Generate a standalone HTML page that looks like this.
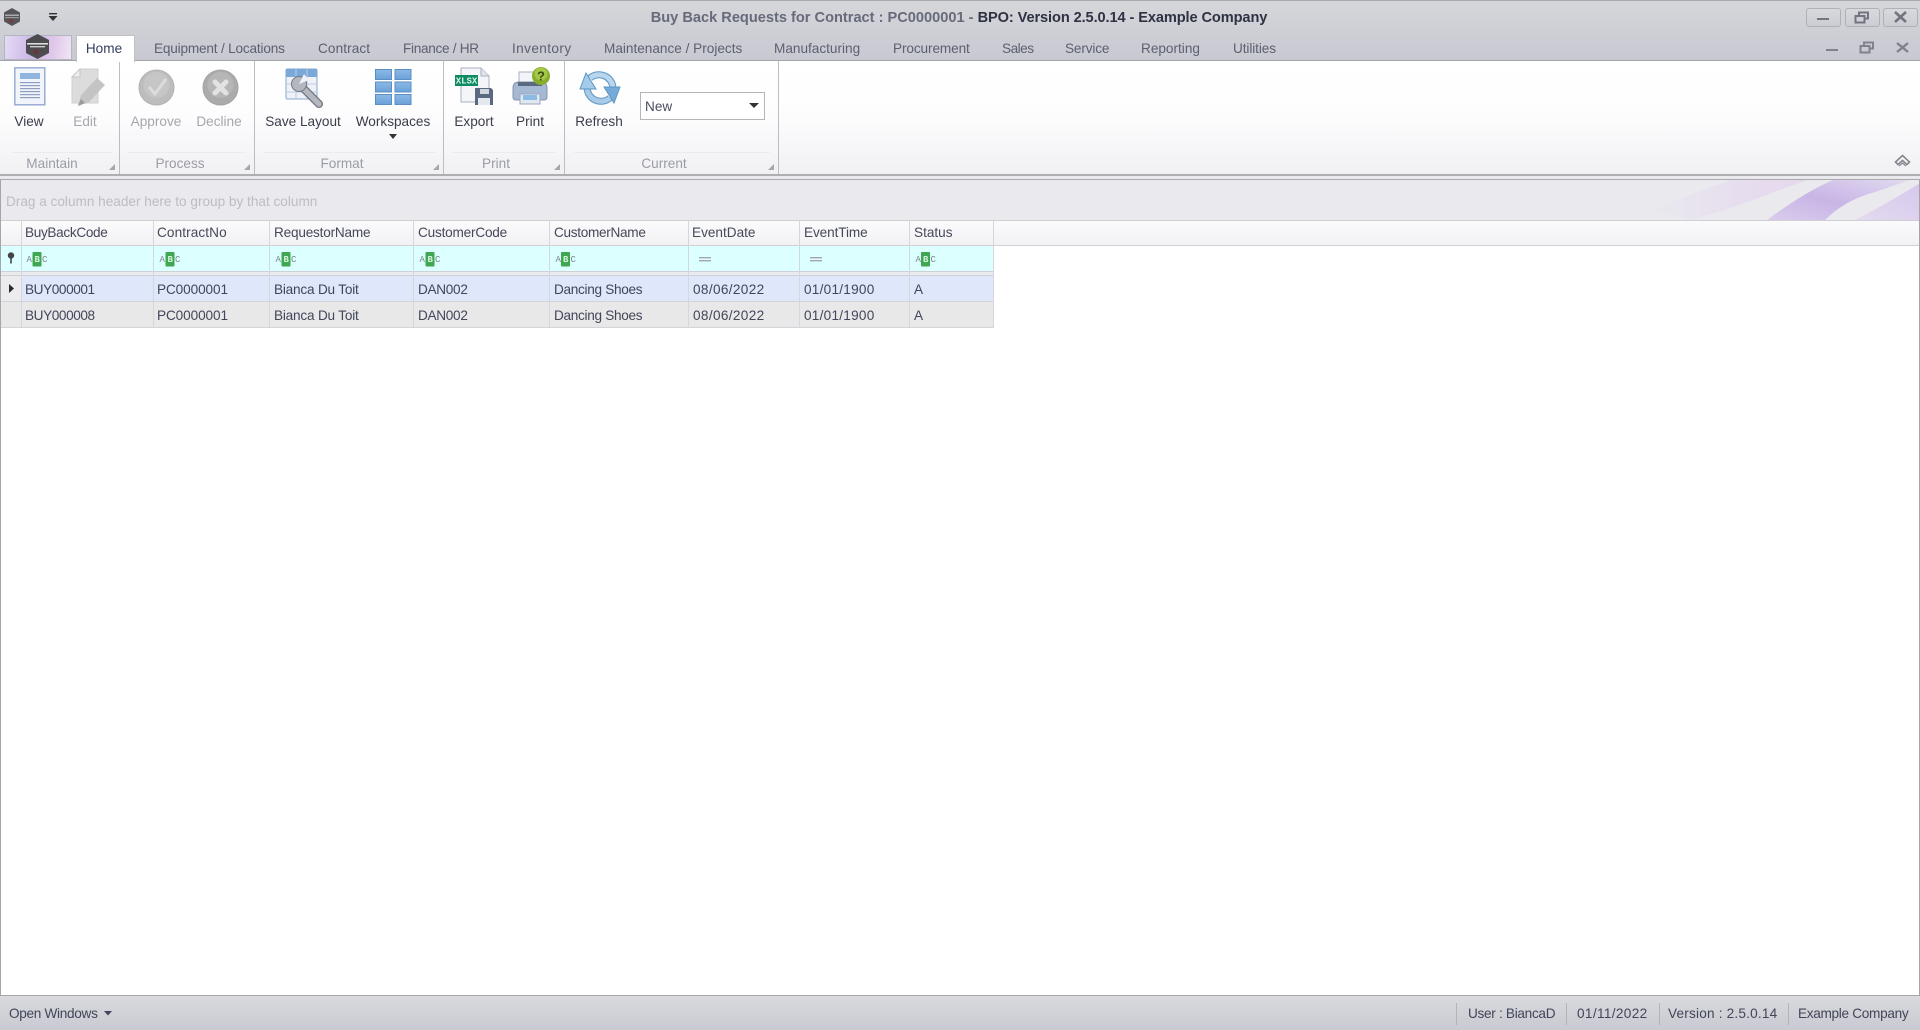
<!DOCTYPE html>
<html><head><meta charset="utf-8"><title>Buy Back Requests</title>
<style>
html,body{margin:0;padding:0;width:1920px;height:1030px;overflow:hidden;background:#fff}
body{position:relative;font-family:"Liberation Sans",sans-serif;font-size:13.6px;color:#3c4050}
div,span.t,svg{position:absolute}
.t{white-space:nowrap;line-height:18px;transform:translateY(-8px)}
.c{transform:translate(-50%,-8px)}
.tab{color:#5c6070;top:48px}
.lab{color:#3a3d4a;top:121px}
.dis{color:#a5a7ad}
.gl{color:#9b9da5;top:163px}
.h{color:#454858;top:232px}
.d{color:#42465a}
.line{background:#d6d7dc}
.bu{letter-spacing:-.4px}.pc{letter-spacing:-.1px}.bi{letter-spacing:-.2px}.da{letter-spacing:-.3px}.ds{letter-spacing:-.3px}.dt{letter-spacing:.35px}.tm{letter-spacing:.25px}
#blur{position:absolute;left:0;top:0;width:1920px;height:1030px;filter:blur(.35px)}
</style></head><body><div id="blur">

<div style="left:0;top:0;width:1920px;height:61px;background:linear-gradient(#d6d7da,#c7c8d1)"></div>
<div style="left:0;top:0;width:1920px;height:1px;background:#aaaaae"></div>
<div style="left:0;top:60px;width:1920px;height:1px;background:#a4a5ab"></div>

<!-- title icons -->
<svg style="left:2px;top:7px" width="20" height="20" viewBox="0 0 20 20"><polygon points="10,1 18,5.5 18,14.5 10,19 2,14.5 2,5.5" fill="#55555a"/><rect x="3" y="7.5" width="14" height="1.5" fill="#aaa"/><rect x="3" y="10" width="14" height="1.2" fill="#999"/><circle cx="9" cy="14" r="2" fill="#7a3a3a"/></svg>
<svg style="left:47px;top:12px" width="12" height="10" viewBox="0 0 12 10"><rect x="2" y="1" width="8" height="1.4" fill="#333"/><polygon points="1.5,4 10.5,4 6,9" fill="#333"/></svg>

<span class="t c" style="left:959px;top:17px;font-weight:bold;font-size:14.6px;color:#666a7a">Buy Back Requests for Contract : PC0000001 - <span style="color:#2e3242;letter-spacing:-.1px">BPO: Version 2.5.0.14 - Example Company</span></span>

<!-- window buttons -->
<div style="left:1806px;top:8px;width:33px;height:17px;border:1px solid #b0b1b8;border-radius:3px;background:linear-gradient(#d8d9dd,#cccdd4)"></div>
<div style="left:1845px;top:8px;width:33px;height:17px;border:1px solid #b0b1b8;border-radius:3px;background:linear-gradient(#d8d9dd,#cccdd4)"></div>
<div style="left:1883px;top:8px;width:33px;height:17px;border:1px solid #b0b1b8;border-radius:3px;background:linear-gradient(#d8d9dd,#cccdd4)"></div>
<div style="left:1817px;top:18px;width:12px;height:2px;background:#73747f"></div>
<svg style="left:1854px;top:11px" width="16" height="13" viewBox="0 0 16 13" fill="none" stroke="#73747f" stroke-width="2"><rect x="5" y="1.5" width="9" height="6"/><rect x="1.5" y="5" width="9" height="6.5" fill="#d0d1d7"/></svg>
<svg style="left:1894px;top:11px" width="13" height="12" viewBox="0 0 13 12" stroke="#73747f" stroke-width="2.6"><path d="M1 1l11 10M12 1L1 11"/></svg>
<div style="left:1826px;top:49px;width:12px;height:2px;background:#80818c"></div>
<svg style="left:1859px;top:41px" width="16" height="13" viewBox="0 0 16 13" fill="none" stroke="#80818c" stroke-width="2"><rect x="5" y="1.5" width="9" height="6"/><rect x="1.5" y="5" width="9" height="6.5" fill="#c9cad2"/></svg>
<svg style="left:1896px;top:42px" width="13" height="11" viewBox="0 0 13 11" stroke="#80818c" stroke-width="2.4"><path d="M1 1l11 9M12 1L1 10"/></svg>

<!-- app button -->
<div style="left:4px;top:35px;width:66px;height:23px;border:1px solid #b5b5c0;background:linear-gradient(100deg,#e4dcf5 0%,#cdb8e8 40%,#dfc6ea 70%,#f0e6f5 100%)"></div>
<svg style="left:25px;top:33px" width="25" height="27" viewBox="0 0 25 27"><polygon points="12.5,1 24,7 24,20 12.5,26 1,20 1,7" fill="#4b4b50"/><rect x="2" y="10" width="21" height="1.6" fill="#ddd"/><rect x="5" y="13" width="15" height="1.4" fill="#ccc"/><circle cx="11" cy="19" r="2.5" fill="#6b3535"/></svg>

<!-- tabs -->
<div style="left:76px;top:35px;width:59px;height:27px;background:#fff;border:1px solid #c0c1c7;border-bottom:none;box-sizing:border-box;z-index:2"></div>
<span class="t c" style="left:104px;top:48px;color:#354060;z-index:3">Home</span>
<span class="t tab" style="left:154px;letter-spacing:-.18px">Equipment / Locations</span>
<span class="t tab" style="left:318px;letter-spacing:.1px">Contract</span>
<span class="t tab" style="left:403px;letter-spacing:-.3px">Finance / HR</span>
<span class="t tab" style="left:512px;letter-spacing:.4px">Inventory</span>
<span class="t tab" style="left:604px">Maintenance / Projects</span>
<span class="t tab" style="left:774px">Manufacturing</span>
<span class="t tab" style="left:893px;letter-spacing:-.1px">Procurement</span>
<span class="t tab" style="left:1002px;letter-spacing:-.5px">Sales</span>
<span class="t tab" style="left:1065px;letter-spacing:-.15px">Service</span>
<span class="t tab" style="left:1141px">Reporting</span>
<span class="t tab" style="left:1233px;letter-spacing:-.1px">Utilities</span>

<!-- ribbon -->
<div style="left:0;top:61px;width:1920px;height:113px;background:linear-gradient(#fff 0%,#fdfdfe 45%,#f1f1f4 100%)"></div>
<div style="left:0;top:174px;width:1920px;height:2px;background:#aeaeb3"></div>
<div style="left:0;top:176px;width:1920px;height:3px;background:#e9e9ee"></div>
<div style="left:0;top:179px;width:1920px;height:1px;background:#a9a9ae"></div>
<div style="left:119px;top:61px;width:1px;height:113px;background:#bcbcc2"></div>
<div style="left:254px;top:61px;width:1px;height:113px;background:#bcbcc2"></div>
<div style="left:443px;top:61px;width:1px;height:113px;background:#bcbcc2"></div>
<div style="left:564px;top:61px;width:1px;height:113px;background:#bcbcc2"></div>
<div style="left:778px;top:61px;width:1px;height:113px;background:#bcbcc2"></div>
<div style="left:12px;top:152px;width:100px;height:1px;background:#ececef"></div>
<div style="left:128px;top:152px;width:118px;height:1px;background:#ececef"></div>
<div style="left:264px;top:152px;width:172px;height:1px;background:#ececef"></div>
<div style="left:452px;top:152px;width:104px;height:1px;background:#ececef"></div>
<div style="left:574px;top:152px;width:196px;height:1px;background:#ececef"></div>

<!-- launchers -->
<svg style="left:0;top:0" width="800" height="175"><g fill="#a5a6ac"><polygon points="115,164 115,170 109,170"/><polygon points="250,164 250,170 244,170"/><polygon points="439,164 439,170 433,170"/><polygon points="560,164 560,170 554,170"/><polygon points="774,164 774,170 768,170"/></g></svg>

<!-- View icon -->
<svg style="left:14px;top:67px" width="32" height="39" viewBox="0 0 32 39"><rect x=".8" y=".8" width="30" height="37" fill="#f1f4fa" stroke="#93a9d2" stroke-width="1.4"/><rect x="6" y="6" width="20" height="6" fill="#8fb4de"/><g fill="#8d9fc4"><rect x="6" y="15" width="20" height="1.2"/><rect x="6" y="18" width="20" height="1.2"/><rect x="6" y="21" width="20" height="1.2"/><rect x="6" y="24" width="20" height="1.2"/><rect x="6" y="27" width="20" height="1.2"/><rect x="6" y="30" width="20" height="1.2"/></g></svg>
<!-- Edit icon -->
<svg style="left:70px;top:68px" width="37" height="40" viewBox="0 0 37 40"><path d="M10 1H28V35H2V9z" fill="#dcdcdc" stroke="#cfcfcf"/><path d="M10 1V9H2z" fill="#f0f0f0" stroke="#c6c6c6"/><path d="M8 38l3-11L27 10l8 7-16 17z" fill="#c4c4c4"/><path d="M8 38l3-7 4 4z" fill="#9a9a9a"/></svg>
<!-- Approve -->
<svg style="left:138px;top:69px" width="37" height="37" viewBox="0 0 37 37"><circle cx="18.5" cy="18.5" r="17.5" fill="#bdbdbd" stroke="#b2b2b2"/><circle cx="18.5" cy="16" r="13" fill="#c6c6c6"/><path d="M11 18l6 7 11-15" fill="none" stroke="#dcdcdc" stroke-width="3"/></svg>
<!-- Decline -->
<svg style="left:202px;top:69px" width="37" height="37" viewBox="0 0 37 37"><circle cx="18.5" cy="18.5" r="17.5" fill="#ababab" stroke="#a3a3a3"/><circle cx="18.5" cy="16" r="13" fill="#b6b6b6"/><path d="M13 13l11 11M24 13L13 24" stroke="#e2e2e2" stroke-width="5" stroke-linecap="round"/></svg>
<!-- Save layout -->
<svg style="left:285px;top:68px" width="39" height="40" viewBox="0 0 39 40"><rect x="1" y="1" width="31" height="30" rx="1.5" fill="#eef2f8" stroke="#8aa6cb"/><rect x="1" y="1" width="31" height="8" fill="#7aa8d8"/><path d="M11 1v30M22 1v30M1 16h31M1 24h31" stroke="#bccbdf"/><path d="M15 17L34 36" stroke="#6f7680" stroke-width="8" stroke-linecap="round"/><path d="M15 17L34 36" stroke="#b4b8be" stroke-width="5.500" stroke-linecap="round"/><circle cx="14" cy="16" r="7.500" fill="#b4b8be" stroke="#6f7680"/><path d="M14 16L19 6 24 12z" fill="#eef2f8"/></svg>
<!-- Workspaces -->
<svg style="left:375px;top:69px" width="37" height="36" viewBox="0 0 37 36"><defs><linearGradient id="w" x1="0" x2="0" y1="0" y2="1"><stop offset="0" stop-color="#8cb9e6"/><stop offset="1" stop-color="#6aa1d9"/></linearGradient></defs><g fill="url(#w)" stroke="#5b8fc4" stroke-width="1"><rect x=".5" y=".5" width="16" height="10"/><rect x="20" y=".5" width="16" height="10"/><rect x=".5" y="13" width="16" height="10"/><rect x="20" y="13" width="16" height="10"/><rect x=".5" y="25.500" width="16" height="10"/><rect x="20" y="25.500" width="16" height="10"/></g></svg>
<svg style="left:387px;top:133px" width="12" height="7" viewBox="0 0 12 7"><polygon points="2,1 10,1 6,6" fill="#333"/></svg>
<!-- Export -->
<svg style="left:454px;top:67px" width="41" height="41" viewBox="0 0 41 41"><path d="M7 1H27L35 9V35H7z" fill="#f3f5f9" stroke="#a8b0be"/><path d="M27 1V9H35" fill="#dfe3ea" stroke="#a8b0be"/><rect x="1" y="8" width="23" height="11" fill="#0f8a62"/><text x="12.500" y="16.500" font-family="Liberation Mono,monospace" font-size="9" font-weight="bold" fill="#d6f5e8" text-anchor="middle">XLSX</text><path d="M21 21H37L39 23V38H21z" fill="#5a6880"/><rect x="26" y="22" width="9" height="5" fill="#cfd6e0"/><rect x="24" y="31" width="12" height="7" fill="#e3e7ee"/></svg>
<!-- Print -->
<svg style="left:511px;top:67px" width="40" height="40" viewBox="0 0 40 40"><rect x="8" y="5" width="20" height="13" fill="#f2f4f8" stroke="#a8b0be"/><path d="M2 21q0-6 6-6h22q6 0 6 6v9q0 3-3 3H5q-3 0-3-3z" fill="#a6b9d4" stroke="#8494ac"/><rect x="7" y="15" width="24" height="4" fill="#5a6980"/><rect x="9" y="27" width="20" height="10" fill="#e2e8f0" stroke="#9aa8bc"/><rect x="12" y="28" width="14" height="5" fill="#8abbe4"/><circle cx="30" cy="9" r="9" fill="#86ad2c"/><circle cx="30" cy="7" r="6.500" fill="#a5c84a"/><text x="30" y="13.500" font-family="Liberation Sans,sans-serif" font-size="13" font-weight="bold" fill="#3a4a10" text-anchor="middle">?</text></svg>
<!-- Refresh -->
<svg style="left:579px;top:71px" width="42" height="34" viewBox="0 0 42 34">
<g fill="none"><path d="M11 7A14 14 0 0 1 34 17" stroke="#5d95c4" stroke-width="7"/><path d="M11 7A14 14 0 0 1 34 17" stroke="#b8d6ee" stroke-width="5"/><path d="M8 16A14 14 0 0 0 31 27" stroke="#5d95c4" stroke-width="7"/><path d="M8 16A14 14 0 0 0 31 27" stroke="#a8cbe8" stroke-width="5"/></g>
<polygon points="7,2 1,18 17,18" fill="#a5cbea" stroke="#5d95c4"/><polygon points="35,32 25,16 41,16" fill="#74abd8" stroke="#5d95c4"/></svg>

<span class="t c lab" style="left:29px">View</span>
<span class="t c lab dis" style="left:85px">Edit</span>
<span class="t c lab dis" style="left:156px">Approve</span>
<span class="t c lab dis" style="left:219px">Decline</span>
<span class="t c lab" style="left:303px">Save Layout</span>
<span class="t c lab" style="left:393px">Workspaces</span>
<span class="t c lab" style="left:474px">Export</span>
<span class="t c lab" style="left:530px">Print</span>
<span class="t c lab" style="left:599px">Refresh</span>

<span class="t c gl" style="left:52px">Maintain</span>
<span class="t c gl" style="left:180px">Process</span>
<span class="t c gl" style="left:342px">Format</span>
<span class="t c gl" style="left:496px">Print</span>
<span class="t c gl" style="left:664px">Current</span>

<!-- combo -->
<div style="left:640px;top:92px;width:123px;height:26px;background:#fff;border:1px solid #b4b4ba"></div>
<span class="t" style="left:645px;top:106px;color:#4a4e60">New</span>
<svg style="left:748px;top:102px" width="12" height="7" viewBox="0 0 12 7"><polygon points="1,1 11,1 6,6" fill="#333"/></svg>

<!-- collapse chevron -->
<svg style="left:1894px;top:154px" width="17" height="14" viewBox="0 0 17 14" fill="none" stroke="#85868e" stroke-width="1.6"><path d="M1.500 8L8.500 1.500 15.500 8 13 10.500 8.500 6.500 4 10.500z"/><path d="M5 12l3.500-3 3.500 3" stroke-width="1.200"/></svg>

<!-- group panel -->
<div style="left:0;top:180px;width:1920px;height:40px;background:#e9e9ee;overflow:hidden">
<svg style="left:1620px;top:0" width="300" height="40" viewBox="0 0 300 40">
<defs>
<linearGradient id="a" x1="0" x2="1" y1="0" y2="0"><stop offset="0" stop-color="#e9e9ee"/><stop offset=".7" stop-color="#e5d8ee"/><stop offset="1" stop-color="#e4d4ec"/></linearGradient>
<linearGradient id="b" x1="0" x2="1" y1="1" y2="0"><stop offset="0" stop-color="#d9cdec"/><stop offset=".45" stop-color="#c8b5e6"/><stop offset="1" stop-color="#e2daf0"/></linearGradient>
<linearGradient id="e" x1="0" x2="1" y1="1" y2="0"><stop offset="0" stop-color="#e4daf0"/><stop offset="1" stop-color="#d6c8ec"/></linearGradient>
</defs>
<polygon points="70,40 105,30 187,0 110,0 30,30" fill="url(#a)" opacity=".8"/>
<path d="M147 40Q185 12 213 0H290L255 12Q225 20 205 40z" fill="url(#b)"/>
<path d="M235 40Q270 22 300 3V40z" fill="url(#e)"/>
</svg>
</div>
<span class="t" style="left:6px;top:201px;color:#bcbdc4;font-size:13.6px">Drag a column header here to group by that column</span>
<div style="left:0;top:220px;width:1920px;height:1px;background:#cfd0d5"></div>

<!-- grid header -->
<div style="left:1px;top:221px;width:1918px;height:24px;background:linear-gradient(#fbfbfc,#f2f2f5)"></div>
<div style="left:1px;top:245px;width:1918px;height:1px;background:#cfd0d5"></div>
<!-- filter -->
<div style="left:1px;top:246px;width:992px;height:25px;background:#dcffff"></div>
<div style="left:1px;top:271px;width:992px;height:5px;background:linear-gradient(#cfd0d5 0 1px,#ebebef 1px 4px,#cfd0d5 4px)"></div>
<!-- rows -->
<div style="left:21px;top:276px;width:972px;height:25px;background:#dfe7fb"></div>
<div style="left:1px;top:276px;width:20px;height:25px;background:#ececef"></div>
<div style="left:1px;top:302px;width:992px;height:25px;background:#e8e8e8"></div>
<div style="left:1px;top:301px;width:992px;height:1px;background:#d3d4d9"></div>
<div style="left:1px;top:327px;width:992px;height:1px;background:#d3d4d9"></div>
<!-- col lines -->
<div class="line" style="left:21px;top:221px;width:1px;height:107px"></div>
<div class="line" style="left:153px;top:221px;width:1px;height:107px"></div>
<div class="line" style="left:269px;top:221px;width:1px;height:107px"></div>
<div class="line" style="left:413px;top:221px;width:1px;height:107px"></div>
<div class="line" style="left:549px;top:221px;width:1px;height:107px"></div>
<div class="line" style="left:688px;top:221px;width:1px;height:107px"></div>
<div class="line" style="left:799px;top:221px;width:1px;height:107px"></div>
<div class="line" style="left:909px;top:221px;width:1px;height:107px"></div>
<div class="line" style="left:993px;top:221px;width:1px;height:107px"></div>

<span class="t h" style="left:25px;letter-spacing:-.33px">BuyBackCode</span>
<span class="t h" style="left:157px;letter-spacing:.1px">ContractNo</span>
<span class="t h" style="left:274px;letter-spacing:-.2px">RequestorName</span>
<span class="t h" style="left:418px;letter-spacing:-.2px">CustomerCode</span>
<span class="t h" style="left:554px;letter-spacing:-.3px">CustomerName</span>
<span class="t h" style="left:692px">EventDate</span>
<span class="t h" style="left:804px;letter-spacing:-.1px">EventTime</span>
<span class="t h" style="left:914px">Status</span>

<!-- filter glyphs -->
<svg style="left:0;top:246px" width="1000" height="25" viewBox="0 0 1000 25" font-family="Liberation Mono,monospace" font-size="9">
<g><text x="26.500" y="16" fill="#7f848c">A</text><rect x="32.500" y="6" width="9" height="14.500" rx="1" fill="#3fa652"/><text x="34.500" y="16" fill="#d8f5dc" font-weight="bold">B</text><text x="42" y="16" fill="#7f848c">C</text></g>
<g><text x="159.500" y="16" fill="#7f848c">A</text><rect x="165.500" y="6" width="9" height="14.500" rx="1" fill="#3fa652"/><text x="167.500" y="16" fill="#d8f5dc" font-weight="bold">B</text><text x="175" y="16" fill="#7f848c">C</text></g>
<g><text x="275.500" y="16" fill="#7f848c">A</text><rect x="281.500" y="6" width="9" height="14.500" rx="1" fill="#3fa652"/><text x="283.500" y="16" fill="#d8f5dc" font-weight="bold">B</text><text x="291" y="16" fill="#7f848c">C</text></g>
<g><text x="419.500" y="16" fill="#7f848c">A</text><rect x="425.500" y="6" width="9" height="14.500" rx="1" fill="#3fa652"/><text x="427.500" y="16" fill="#d8f5dc" font-weight="bold">B</text><text x="435" y="16" fill="#7f848c">C</text></g>
<g><text x="555.500" y="16" fill="#7f848c">A</text><rect x="561" y="6" width="9" height="14.500" rx="1" fill="#3fa652"/><text x="563" y="16" fill="#d8f5dc" font-weight="bold">B</text><text x="570.500" y="16" fill="#7f848c">C</text></g>
<g><text x="915.500" y="16" fill="#7f848c">A</text><rect x="921" y="6" width="9" height="14.500" rx="1" fill="#3fa652"/><text x="923" y="16" fill="#d8f5dc" font-weight="bold">B</text><text x="930.500" y="16" fill="#7f848c">C</text></g>
<g fill="#a3a6aa"><rect x="699" y="11" width="12" height="1.400"/><rect x="699" y="14" width="12" height="1.400"/><rect x="810" y="11" width="12" height="1.400"/><rect x="810" y="14" width="12" height="1.400"/></g>
<circle cx="11" cy="9.500" r="3.200" fill="#444"/><rect x="10.200" y="11" width="1.600" height="6.500" fill="#444"/>
</svg>
<svg style="left:7px;top:283px" width="8" height="11" viewBox="0 0 8 11"><polygon points="2,1 7,5.500 2,10" fill="#2a2a2a"/></svg>

<span class="t d bu" style="left:25px;top:289px">BUY000001</span>
<span class="t d pc" style="left:157px;top:289px">PC0000001</span>
<span class="t d bi" style="left:274px;top:289px">Bianca Du Toit</span>
<span class="t d da" style="left:418px;top:289px">DAN002</span>
<span class="t d ds" style="left:554px;top:289px">Dancing Shoes</span>
<span class="t d dt" style="left:693px;top:289px">08/06/2022</span>
<span class="t d tm" style="left:804px;top:289px">01/01/1900</span>
<span class="t d" style="left:914px;top:289px">A</span>

<span class="t d bu" style="left:25px;top:315px">BUY000008</span>
<span class="t d pc" style="left:157px;top:315px">PC0000001</span>
<span class="t d bi" style="left:274px;top:315px">Bianca Du Toit</span>
<span class="t d da" style="left:418px;top:315px">DAN002</span>
<span class="t d ds" style="left:554px;top:315px">Dancing Shoes</span>
<span class="t d dt" style="left:693px;top:315px">08/06/2022</span>
<span class="t d tm" style="left:804px;top:315px">01/01/1900</span>
<span class="t d" style="left:914px;top:315px">A</span>

<!-- side borders -->
<div style="left:0;top:180px;width:1px;height:816px;background:#a5a5aa"></div>
<div style="left:1919px;top:180px;width:1px;height:816px;background:#a5a5aa"></div>

<!-- status bar -->
<div style="left:0;top:995px;width:1920px;height:35px;background:linear-gradient(#d9dadd,#c9cad2);border-top:1px solid #a5a5aa;box-sizing:border-box"></div>
<span class="t" style="left:9px;top:1013px;color:#414558;letter-spacing:-.3px">Open Windows</span>
<svg style="left:103px;top:1010px" width="10" height="7" viewBox="0 0 10 7"><polygon points="1,1 9,1 5,5.500" fill="#414558"/></svg>
<div style="left:1456px;top:1003px;width:1px;height:22px;background:#b3b4bb"></div>
<div style="left:1566px;top:1003px;width:1px;height:22px;background:#b3b4bb"></div>
<div style="left:1659px;top:1003px;width:1px;height:22px;background:#b3b4bb"></div>
<div style="left:1788px;top:1003px;width:1px;height:22px;background:#b3b4bb"></div>
<span class="t" style="left:1468px;top:1013px;color:#414558;letter-spacing:-.3px">User : BiancaD</span>
<span class="t" style="left:1577px;top:1013px;color:#414558;letter-spacing:.35px">01/11/2022</span>
<span class="t" style="left:1668px;top:1013px;color:#414558;letter-spacing:.2px">Version : 2.5.0.14</span>
<span class="t" style="left:1798px;top:1013px;color:#414558;letter-spacing:-.3px">Example Company</span>
</div></body></html>
